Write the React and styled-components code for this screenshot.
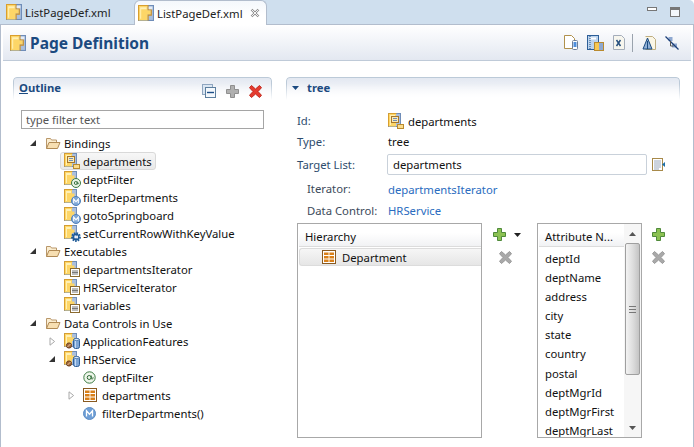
import React from 'react';
import styled, { createGlobalStyle } from 'styled-components';

const GlobalStyle = createGlobalStyle`
  html, body { margin: 0; padding: 0; background: #fff; }
  body { font-family: "Noto Sans", "Open Sans", Arial, sans-serif; font-size: 11.3px; color: #111; }
`;

const Window = styled.div`
  width: 694px;
  height: 447px;
  overflow: hidden;
  display: flex;
  flex-direction: column;
  background: #fff;
`;

const TabBar = styled.div`
  height: 24px;
  display: flex;
  align-items: stretch;
  background: #cfdfee;
  border-bottom: 1px solid #b2bdcd;
  border-top-right-radius: 5px;
  flex: none;
`;

const Tab = styled.div`
  width: ${(p) => (p.$active ? '133px' : '134px')};
  height: ${(p) => (p.$active ? '25px' : '24px')};
  box-sizing: border-box;
  display: flex;
  align-items: center;
  gap: 3px;
  padding-left: ${(p) => (p.$active ? '3px' : '6px')};
  background: ${(p) => (p.$active ? 'linear-gradient(#f4f8fc, #fff 60%)' : 'transparent')};
  border: ${(p) => (p.$active ? '1px solid #b2bdcd' : 'none')};
  border-bottom: none;
  border-radius: 6px 6px 0 0;
  color: #222;
`;

const TabClose = styled.svg`
  margin-left: 4px;
  flex: none;
`;

const WindowButtons = styled.div`
  margin-left: auto;
  display: flex;
  gap: 13px;
  padding: 7px 14px 0 0;
`;

const Main = styled.div`
  flex: 1;
  display: flex;
  flex-direction: column;
  border-left: 1px solid #b2bdcd;
  border-right: 1px solid #b2bdcd;
  min-height: 0;
`;

const Header = styled.div`
  height: 35px;
  flex: none;
  margin: 0 2px;
  display: flex;
  align-items: center;
  padding-left: 7px;
  background: linear-gradient(#fff, #e3e8f1);
  border-bottom: 1px solid #bfcad8;
`;

const Title = styled.h1`
  margin: 0 0 0 4px;
  font-size: 15.5px;
  line-height: 20px;
  font-weight: 700;
  color: #1b4a80;
`;

const Toolbar = styled.div`
  margin-left: auto;
  display: flex;
  align-items: center;
  padding-right: 12px;
`;

const ToolSep = styled.span`
  width: 1px;
  height: 18px;
  background: #9aa3ad;
  margin: 0 9px 0 7px;
`;

const Body = styled.div`
  flex: 1;
  display: flex;
  gap: 14px;
  padding: 16px 12px 0;
  min-height: 0;
`;

const Section = styled.section`
  width: ${(p) => p.$width}px;
  flex: none;
  display: flex;
  flex-direction: column;
`;

const SectionHead = styled.div`
  position: relative;
  height: 23px;
  box-sizing: border-box;
  display: flex;
  align-items: flex-start;
  padding: 2px 0 0 6px;
  font-weight: 700;
  color: #1b4a80;
  line-height: 17px;
  &::before {
    content: '';
    position: absolute;
    inset: 0;
    border: 1px solid #bccad8;
    border-bottom: none;
    border-radius: 4px 4px 0 0;
    background: linear-gradient(#e3e8f1, #fff);
    mask-image: linear-gradient(#000 30%, transparent);
  }
  & > * { position: relative; }
`;

const HeadActions = styled.div`
  margin-left: auto;
  display: flex;
  align-items: center;
  gap: 10px;
  padding: 5px 10px 0 0;
`;

const Filter = styled.input`
  display: block;
  width: 243px;
  height: 19px;
  box-sizing: border-box;
  margin: 10px 0 5px 8px;
  padding: 0 4px;
  border: 1px solid #a5a5a5;
  font: inherit;
  color: #555;
  &::placeholder { color: #555; opacity: 1; }
`;

const Tree = styled.ul`
  list-style: none;
  margin: 0;
  padding: 0;
`;

const Row = styled.li`
  height: 18px;
  display: flex;
  align-items: center;
  padding-left: ${(p) => 17 + 19 * p.$level}px;
`;

const Twist = styled.span`
  width: 14px;
  flex: none;
  display: flex;
  align-items: center;
`;

const Item = styled.span`
  display: flex;
  align-items: center;
  height: 18px;
  box-sizing: border-box;
  margin-left: -3px;
  padding: 0 3px;
  border: 1px solid ${(p) => (p.$selected ? '#d9d9d9' : 'transparent')};
  border-radius: 3px;
  background: ${(p) => (p.$selected ? 'linear-gradient(#f7f7f7, #e9e9e9)' : 'transparent')};
  white-space: nowrap;
`;

const IconCell = styled.span`
  width: 19px;
  height: 16px;
  flex: none;
  display: flex;
  align-items: center;
`;

const Form = styled.div`
  padding-left: 11px;
  padding-top: 11px;
  display: grid;
  grid-template-columns: 90px 260px auto;
  grid-auto-rows: auto;
  align-items: center;
`;

const Label = styled.span`
  height: ${(p) => p.$h}px;
  line-height: ${(p) => p.$h}px;
  padding-left: ${(p) => (p.$sub ? '10px' : '0')};
  color: ${(p) => (p.$sub ? '#3c4a5a' : '#2e4c6d')};
`;

const Value = styled.span`
  grid-column: 2 / 4;
  display: flex;
  align-items: center;
  gap: 3px;
  padding-left: 1px;
  height: ${(p) => p.$h}px;
`;

const LinkValue = styled(Value)`
  color: #2a6cc0;
`;

const TargetInput = styled.input`
  width: 260px;
  height: 21px;
  box-sizing: border-box;
  padding: 0 5px;
  border: 1px solid #c9d1da;
  border-radius: 2px;
  font: inherit;
  color: #111;
`;

const TargetButton = styled.span`
  display: flex;
  padding-left: 5px;
`;

const Tables = styled.div`
  display: flex;
  margin: 3px 0 0 11px;
  height: 215px;
`;

const Box = styled.div`
  width: ${(p) => p.$width}px;
  height: 215px;
  box-sizing: border-box;
  flex: none;
  border: 1px solid #a8a8a8;
  background: #fff;
  display: flex;
  overflow: hidden;
`;

const BoxColumn = styled.div`
  flex: 1;
  min-width: 0;
  padding-left: 1px;
`;

const ColumnHead = styled.div`
  height: 23px;
  box-sizing: border-box;
  padding-left: ${(p) => p.$pad}px;
  padding-top: 3px;
  line-height: 20px;
  background: linear-gradient(#fff 40%, #f1f2f4);
  border-bottom: 1px solid #dcdcdc;
  margin-bottom: 1px;
`;

const HierRow = styled.div`
  height: 18px;
  box-sizing: border-box;
  margin-top: 1px;
  display: flex;
  align-items: center;
  gap: 6px;
  padding-left: 22px;
  border: 1px solid #dcdcdc;
  border-right: none;
  border-radius: 3px 0 0 3px;
  background: linear-gradient(#f6f6f6, #e6e6e6);
`;

const AttrRow = styled.div`
  height: 19.1px;
  line-height: 19px;
  padding-left: 6px;
  white-space: nowrap;
`;

const AttrList = styled.div`
  padding-top: 1px;
`;

const ScrollBar = styled.div`
  width: 17px;
  flex: none;
  display: flex;
  flex-direction: column;
  align-items: center;
  background: #f6f6f6;
`;

const ScrollArrow = styled.span`
  height: 19px;
  flex: none;
  display: flex;
  align-items: center;
  justify-content: center;
`;

const ScrollThumb = styled.div`
  width: 15px;
  height: 132px;
  box-sizing: border-box;
  border: 1px solid #9f9f9f;
  border-radius: 2px;
  background: linear-gradient(90deg, #f3f3f3, #dcdcdc 55%, #c4c4c4);
  display: flex;
  align-items: center;
  justify-content: center;
`;

const Grip = styled.span`
  width: 7px;
  height: 5px;
  border-top: 1px solid #777;
  border-bottom: 1px solid #777;
  position: relative;
  &::after {
    content: '';
    position: absolute;
    left: 0;
    right: 0;
    top: 2px;
    height: 1px;
    background: #777;
  }
`;

const ScrollGap = styled.div`
  flex: 1;
`;

const EditButtons = styled.div`
  width: ${(p) => p.$width}px;
  flex: none;
  box-sizing: border-box;
  padding: 5px 0 0 ${(p) => p.$pad}px;
  display: flex;
  flex-direction: column;
  gap: 10px;
`;

const ButtonLine = styled.div`
  display: flex;
  align-items: center;
  gap: 8px;
  padding-left: ${(p) => p.$indent || 0}px;
`;

const PageDefBase = () => (
  <>
    <rect x="0.5" y="0.5" width="14" height="14" fill="#aabfdd" stroke="#6f8db8" />
    <path d="M1 1v13" stroke="#d99f2e" />
    <path d="M.5 14.500v-14h9" fill="none" stroke="#d99f2e" />
    <path d="M1 1h8v4h3v4H9v5.500H1z" fill="#fdd667" />
    <path d="M2 2h6v2H3v9H2z" fill="#fff0b4" />
    <path d="M9.500 .5v4h3v5h-3v5" fill="none" stroke="#c98f2a" />
    <path d="M10 1.500h3.500v2.500H10z" fill="#e4ebf5" />
  </>
);

const PageDefIcon = ({ size = 16 }) => (
  <svg width={size} height={size} viewBox="0 0 15 15" style={{ flex: 'none' }}>
    <PageDefBase />
  </svg>
);

const Overlay = ({ kind }) => {
  if (kind === 'attr') {
    return (
      <>
        <circle cx="12" cy="12" r="4.500" fill="#e9f3e5" stroke="#3c7a43" />
        <circle cx="11.800" cy="12" r="1.500" fill="none" stroke="#2f6a37" strokeWidth="0.900" />
        <path d="M13.300 10.500v2.400c.5.800 1.400 0 1.100-1.200" fill="none" stroke="#2f6a37" strokeWidth="0.800" />
      </>
    );
  }
  if (kind === 'method') {
    return (
      <>
        <circle cx="12" cy="12" r="4.500" fill="#7fa8d8" stroke="#4f7fb8" />
        <path d="M9.700 14.300v-4.300l2.300 2.800 2.300-2.800v4.300" fill="none" stroke="#fff" strokeWidth="1.100" />
      </>
    );
  }
  if (kind === 'gear') {
    return (
      <>
        <circle cx="12" cy="12" r="4" fill="none" stroke="#1d5a96" strokeWidth="1.800" strokeDasharray="1.600 1.100" />
        <circle cx="12" cy="12" r="2.800" fill="none" stroke="#1d5a96" strokeWidth="1.500" />
        <circle cx="12" cy="12" r="1" fill="#fff" />
      </>
    );
  }
  if (kind === 'iter') {
    return (
      <>
        <rect x="6.500" y="7.500" width="9" height="8" fill="#fff" stroke="#8a6a30" />
        <path d="M8 10h6M8 11.500h6M8 13h6" stroke="#555" strokeWidth="0.800" />
      </>
    );
  }
  if (kind === 'dc') {
    return (
      <>
        <rect x="9.500" y="5.500" width="6" height="10" rx="2" fill="#7ea6d6" stroke="#2f5f98" />
        <ellipse cx="12.500" cy="6.500" rx="2.500" ry="1.100" fill="#dbe8f6" stroke="#2f5f98" strokeWidth="0.600" />
        <path d="M11.500 8v7" stroke="#c6dbf2" />
        <circle cx="5" cy="12.500" r="2.600" fill="#a5683a" stroke="#6a3e1e" />
        <path d="M3.500 14l3-3" stroke="#e2c3a0" />
      </>
    );
  }
  return (
    <>
      <rect x="3.500" y="3.500" width="7" height="6" fill="#fbe9b4" stroke="#a5762a" />
      <path d="M5 5.500h4M5 7.500h4" stroke="#6f8fb8" />
      <rect x="9.500" y="11.500" width="6" height="4" fill="#fbdc8a" stroke="#b98a2e" />
    </>
  );
};

const BindingIcon = ({ kind }) => (
  <svg width="17" height="17" viewBox="0 0 17 17" style={{ flex: 'none' }}>
    <rect x="0.500" y="0.500" width="12" height="13" fill="#aabfdd" stroke="#6f8db8" />
    <path d="M.5 13.500V.5h8" fill="none" stroke="#d99f2e" />
    <path d="M1 1h7v3.500h2.500V8H8v5.500H1z" fill="#fdd667" />
    <path d="M2 2h5v2H3v8H2z" fill="#fff0b4" />
    <Overlay kind={kind} />
  </svg>
);

const FolderIcon = () => (
  <svg width="16" height="14" viewBox="0 0 16 14">
    <path d="M1.500 12.500v-10h4l1 1.500h5v2" fill="#fbeed2" stroke="#b9976a" />
    <path d="M1.500 12.500l2.500-6h11l-2.500 6z" fill="#f7dfb2" stroke="#b08a55" />
  </svg>
);

const EntityIcon = () => (
  <svg width="14" height="14" viewBox="0 0 14 14" style={{ flex: 'none' }}>
    <rect x="0.500" y="0.500" width="13" height="13" fill="#fff" stroke="#8a5a20" />
    <path d="M2 2.500h10v2.500H2zM2 6h10v2.500H2zM2 9.500h10V12H2z" fill="#d9801a" />
    <path d="M7 2v10" stroke="#fff3df" />
  </svg>
);

const AtIcon = () => (
  <svg width="13" height="13" viewBox="0 0 13 13">
    <circle cx="6.500" cy="6.500" r="5.700" fill="#eef6ea" stroke="#3c7a43" />
    <circle cx="6.200" cy="6.500" r="2" fill="none" stroke="#2f6a37" />
    <path d="M8.200 4.500v3c.5 1.200 2 .6 1.900-1.200" fill="none" stroke="#2f6a37" />
  </svg>
);

const MethodIcon = () => (
  <svg width="13" height="13" viewBox="0 0 13 13">
    <circle cx="6.500" cy="6.500" r="6" fill="#6f9fd6" stroke="#5b8cc4" />
    <path d="M3.500 9.500V3.800l3 3.400 3-3.400v5.700" fill="none" stroke="#fff" strokeWidth="1.300" />
  </svg>
);

const Down = () => (
  <svg width="6" height="6" viewBox="0 0 6 6">
    <path d="M6 0v6H0z" fill="#333" />
  </svg>
);

const Right = () => (
  <svg width="7" height="9" viewBox="0 0 7 9">
    <path d="M1 .8l4.600 3.700L1 8.200z" fill="#fff" stroke="#a8a8a8" />
  </svg>
);

const Twisty = ({ open }) => (
  <Twist>
    {open === true && <Down />}
    {open === false && <Right />}
  </Twist>
);

const Plus = ({ gray }) => (
  <svg width="13" height="13" viewBox="0 0 13 13">
    <path d="M4.500 .5h4v4h4v4h-4v4h-4v-4h-4v-4h4z" fill={gray ? '#b0b0b0' : '#8cc152'} stroke={gray ? '#8f8f8f' : '#4f8a3a'} />
  </svg>
);

const Cross = ({ red }) => (
  <svg width="13" height="13" viewBox="0 0 13 13">
    <path d="M2.500 .5l4 3.500 4-3.500 2 2.200L9 6.500l3.500 3.800-2 2.200-4-3.500-4 3.500-2-2.200L4 6.500.5 2.700z" fill={red ? '#e53b2f' : '#a9a9a9'} stroke={red ? '#c02a20' : '#989898'} />
  </svg>
);

const Collapse = () => (
  <svg width="14" height="14" viewBox="0 0 14 14">
    <rect x="0.500" y="0.500" width="10" height="10" fill="#dbe6f2" stroke="#8fa6c0" />
    <rect x="3.500" y="3.500" width="10" height="10" fill="#f4f8fc" stroke="#5d7f9f" />
    <path d="M5 8.500h7" stroke="#1d4f88" strokeWidth="1.400" />
  </svg>
);

const Caret = ({ w = 7, color = '#222', up }) => (
  <svg width={w} height="4" viewBox="0 0 7 4">
    <path d={up ? 'M0 4h7L3.500 0z' : 'M0 0h7L3.500 4z'} fill={color} />
  </svg>
);

const HeadCaret = styled.span`
  display: flex;
  align-items: center;
  gap: 8px;
`;

const ListDocIcon = () => (
  <svg width="13" height="13" viewBox="0 0 13 13">
    <rect x="0.500" y="0.500" width="10" height="12" fill="#fff" stroke="#a88a4a" />
    <path d="M2 3h7M2 5h7M2 7h7M2 9h7M2 11h5" stroke="#9aa8bc" />
    <path d="M13 4v5L10 6.500z" fill="#1d6fa8" />
  </svg>
);

const NotebookTool = () => (
  <svg width="17" height="16" viewBox="0 0 17 16">
    <rect x="0.500" y="0.500" width="11" height="14" fill="#bcd4ee" stroke="#2d5f98" />
    <path d="M3 3.500h6" stroke="#fff" strokeWidth="2" />
    <path d="M3 1v13" stroke="#1b4a80" strokeDasharray="1 1" />
    <rect x="7.500" y="7.500" width="9" height="8" fill="#f7c852" stroke="#b98a2e" />
    <rect x="12" y="8" width="4" height="7" fill="#8ea8d0" />
  </svg>
);

const MobileTool = () => (
  <svg width="15" height="15" viewBox="0 0 15 15">
    <path d="M.5.500h7l3 3v10H.5z" fill="#fff" stroke="#b0914c" />
    <rect x="8.500" y="5.500" width="5" height="9" rx="1" fill="#fff" stroke="#6d7f99" />
    <rect x="9.500" y="7" width="3" height="5" fill="#4f8fdc" />
  </svg>
);

const XDocTool = () => (
  <svg width="12" height="15" viewBox="0 0 12 15">
    <path d="M.5.500h8l3 3v11H.5z" fill="#f7f6ee" stroke="#a4adba" />
    <path d="M3.500 5l4 6M7.500 5l-4 6" stroke="#27507f" strokeWidth="1.500" />
  </svg>
);

const ADocTool = () => (
  <svg width="14" height="14" viewBox="0 0 14 14">
    <path d="M3.500.500h7l3 3v10h-10" fill="#faf6e6" stroke="#bfae80" />
    <path d="M1 13L5.500 2 10 13z" fill="#8fb0d8" stroke="#1b4a80" />
    <path d="M5.500 5v8" stroke="#1b4a80" />
  </svg>
);

const ArrowsOffTool = () => (
  <svg width="14" height="14" viewBox="0 0 14 14">
    <rect x="3.500" y="1" width="4" height="4" fill="#8ea8d0" />
    <rect x="7" y="7.500" width="5" height="4" fill="#8ea8d0" />
    <path d="M.5.500l13 13" stroke="#1b3f78" strokeWidth="1.300" />
    <path d="M5.500 5v5h3" fill="none" stroke="#555" />
  </svg>
);

const Tool = styled.span`
  display: flex;
  margin-left: ${(p) => p.$gap || 0}px;
`;

const tree = [
  { level: 0, open: true, icon: 'folder', text: 'Bindings' },
  { level: 1, kind: 'tree', text: 'departments', selected: true },
  { level: 1, kind: 'attr', text: 'deptFilter' },
  { level: 1, kind: 'method', text: 'filterDepartments' },
  { level: 1, kind: 'method', text: 'gotoSpringboard' },
  { level: 1, kind: 'gear', text: 'setCurrentRowWithKeyValue' },
  { level: 0, open: true, icon: 'folder', text: 'Executables' },
  { level: 1, kind: 'iter', text: 'departmentsIterator' },
  { level: 1, kind: 'iter', text: 'HRServiceIterator' },
  { level: 1, kind: 'iter', text: 'variables' },
  { level: 0, open: true, icon: 'folder', text: 'Data Controls in Use' },
  { level: 1, open: false, kind: 'dc', text: 'ApplicationFeatures' },
  { level: 1, open: true, kind: 'dc', text: 'HRService' },
  { level: 2, icon: 'at', text: 'deptFilter' },
  { level: 2, open: false, icon: 'entity', text: 'departments' },
  { level: 2, icon: 'method', text: 'filterDepartments()' },
];

const attributes = [
  'deptId',
  'deptName',
  'address',
  'city',
  'state',
  'country',
  'postal',
  'deptMgrId',
  'deptMgrFirst',
  'deptMgrLast',
];

function NodeIcon({ node }) {
  if (node.icon === 'folder') return <FolderIcon />;
  if (node.icon === 'at') return <AtIcon />;
  if (node.icon === 'entity') return <EntityIcon />;
  if (node.icon === 'method') return <MethodIcon />;
  return <BindingIcon kind={node.kind} />;
}

export default function App() {
  return (
    <Window>
      <GlobalStyle />
      <TabBar>
        <Tab>
          <PageDefIcon />
          ListPageDef.xml
        </Tab>
        <Tab $active>
          <PageDefIcon />
          ListPageDef.xml
          <TabClose width="10" height="10" viewBox="0 0 10 10">
            <path d="M1.500 1.500l7 7M8.500 1.500l-7 7" stroke="#8f8f8f" strokeWidth="2.400" />
            <path d="M1.500 1.500l7 7M8.500 1.500l-7 7" stroke="#fff" strokeWidth="0.900" />
          </TabClose>
        </Tab>
        <WindowButtons>
          <svg width="10" height="4" viewBox="0 0 10 4">
            <rect x="0.500" y="0.500" width="9" height="3" fill="#fff" stroke="#777" />
          </svg>
          <svg width="10" height="10" viewBox="0 0 10 10">
            <rect x="0.500" y="0.500" width="9" height="9" fill="#f4f8fc" stroke="#777" />
            <path d="M0 2h10" stroke="#777" strokeWidth="2" />
          </svg>
        </WindowButtons>
      </TabBar>
      <Main>
        <Header>
          <PageDefIcon size={16} />
          <Title>Page Definition</Title>
          <Toolbar>
            <MobileTool />
            <Tool $gap={8}><NotebookTool /></Tool>
            <Tool $gap={9}><XDocTool /></Tool>
            <ToolSep />
            <ADocTool />
            <Tool $gap={9}><ArrowsOffTool /></Tool>
          </Toolbar>
        </Header>
        <Body>
          <Section $width={259}>
            <SectionHead>
              <span><u>O</u>utline</span>
              <HeadActions>
                <Collapse />
                <Plus gray />
                <Cross red />
              </HeadActions>
            </SectionHead>
            <Filter placeholder="type filter text" />
            <Tree>
              {tree.map((node, i) => (
                <Row key={i} $level={node.level}>
                  <Twisty open={node.open} />
                  <Item $selected={node.selected}>
                    <IconCell><NodeIcon node={node} /></IconCell>
                    {node.text}
                  </Item>
                </Row>
              ))}
            </Tree>
          </Section>
          <Section $width={394}>
            <SectionHead>
              <HeadCaret>
                <Caret color="#1b4a80" />
                tree
              </HeadCaret>
            </SectionHead>
            <Form>
              <Label $h={20}>Id:</Label>
              <Value $h={20}>
                <BindingIcon kind="tree" />
                departments
              </Value>
              <Label $h={21}>Type:</Label>
              <Value $h={21}>tree</Value>
              <Label $h={25}>Target List:</Label>
              <TargetInput defaultValue="departments" />
              <TargetButton><ListDocIcon /></TargetButton>
              <Label $h={24} $sub>Iterator:</Label>
              <LinkValue $h={24}>departmentsIterator</LinkValue>
              <Label $h={19} $sub>Data Control:</Label>
              <LinkValue $h={19}>HRService</LinkValue>
            </Form>
            <Tables>
              <Box $width={185}>
                <BoxColumn>
                  <ColumnHead $pad={6}>Hierarchy</ColumnHead>
                  <HierRow>
                    <EntityIcon />
                    Department
                  </HierRow>
                </BoxColumn>
              </Box>
              <EditButtons $width={55} $pad={11}>
                <ButtonLine>
                  <Plus />
                  <Caret />
                </ButtonLine>
                <ButtonLine $indent={6}>
                  <Cross />
                </ButtonLine>
              </EditButtons>
              <Box $width={105}>
                <BoxColumn>
                  <ColumnHead $pad={6}>Attribute N...</ColumnHead>
                  <AttrList>
                    {attributes.map((name) => (
                      <AttrRow key={name}>{name}</AttrRow>
                    ))}
                  </AttrList>
                </BoxColumn>
                <ScrollBar>
                  <ScrollArrow><Caret w={7} color="#555" up /></ScrollArrow>
                  <ScrollThumb><Grip /></ScrollThumb>
                  <ScrollGap />
                  <ScrollArrow><Caret w={7} color="#555" /></ScrollArrow>
                </ScrollBar>
              </Box>
              <EditButtons $width={30} $pad={10}>
                <ButtonLine>
                  <Plus />
                </ButtonLine>
                <ButtonLine>
                  <Cross />
                </ButtonLine>
              </EditButtons>
            </Tables>
          </Section>
        </Body>
      </Main>
    </Window>
  );
}
